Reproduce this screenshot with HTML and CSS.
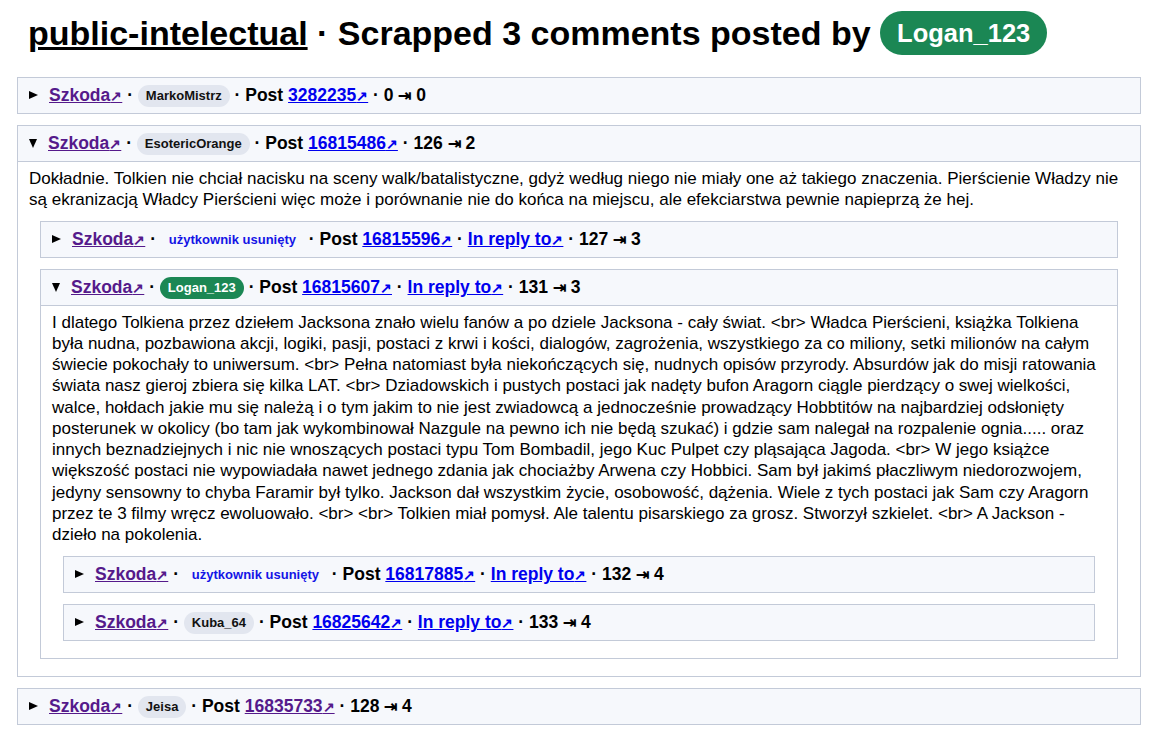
FILE: index.html
```html
<!DOCTYPE html>
<html lang="pl">
<head>
<meta charset="utf-8">
<title>public-intelectual</title>
<link rel="stylesheet" href="styles.css">
</head>
<body>
<main class="page">
  <h1 class="title"><a class="title-link" href="#">public-intelectual</a> · Scrapped 3 comments posted by <span class="chip chip-big chip-green">Logan_123</span></h1>

  <details class="c">
    <summary class="s"><a class="ln visited" href="#">Szkoda<span class="ar">↗</span></a> · <span class="chip chip-gray">MarkoMistrz</span> · Post <a class="ln" href="#">3282235<span class="ar">↗</span></a> · 0 <span class="tab">⇥</span> 0</summary>
  </details>

  <details class="c" open>
    <summary class="s"><a class="ln visited" href="#">Szkoda<span class="ar">↗</span></a> · <span class="chip chip-gray">EsotericOrange</span> · Post <a class="ln" href="#">16815486<span class="ar">↗</span></a> · 126 <span class="tab">⇥</span> 2</summary>
    <div class="b">
      <p class="t">Dokładnie. Tolkien nie chciał nacisku na sceny walk/batalistyczne, gdyż według niego nie miały one aż takiego znaczenia. Pierścienie Władzy nie są ekranizacją Władcy Pierścieni więc może i porównanie nie do końca na miejscu, ale efekciarstwa pewnie napieprzą że hej.</p>

      <details class="c">
        <summary class="s"><a class="ln visited" href="#">Szkoda<span class="ar">↗</span></a> · <span class="chip chip-del">użytkownik usunięty</span> · Post <a class="ln" href="#">16815596<span class="ar">↗</span></a> · <a class="ln" href="#">In reply to<span class="ar">↗</span></a> · 127 <span class="tab">⇥</span> 3</summary>
      </details>

      <details class="c" open>
        <summary class="s"><a class="ln visited" href="#">Szkoda<span class="ar">↗</span></a> · <span class="chip chip-green">Logan_123</span> · Post <a class="ln" href="#">16815607<span class="ar">↗</span></a> · <a class="ln" href="#">In reply to<span class="ar">↗</span></a> · 131 <span class="tab">⇥</span> 3</summary>
        <div class="b">
          <p class="t">I dlatego Tolkiena przez dziełem Jacksona znało wielu fanów a po dziele Jacksona - cały świat. &lt;br&gt; Władca Pierścieni, książka Tolkiena była nudna, pozbawiona akcji, logiki, pasji, postaci z krwi i kości, dialogów, zagrożenia, wszystkiego za co miliony, setki milionów na całym świecie pokochały to uniwersum. &lt;br&gt; Pełna natomiast była niekończących się, nudnych opisów przyrody. Absurdów jak do misji ratowania świata nasz gieroj zbiera się kilka LAT. &lt;br&gt; Dziadowskich i pustych postaci jak nadęty bufon Aragorn ciągle pierdzący o swej wielkości, walce, hołdach jakie mu się należą i o tym jakim to nie jest zwiadowcą a jednocześnie prowadzący Hobbtitów na najbardziej odsłonięty posterunek w okolicy (bo tam jak wykombinował Nazgule na pewno ich nie będą szukać) i gdzie sam nalegał na rozpalenie ognia..... oraz innych beznadziejnych i nic nie wnoszących postaci typu Tom Bombadil, jego Kuc Pulpet czy pląsająca Jagoda. &lt;br&gt; W jego książce większość postaci nie wypowiadała nawet jednego zdania jak chociażby Arwena czy Hobbici. Sam był jakimś płaczliwym niedorozwojem, jedyny sensowny to chyba Faramir był tylko. Jackson dał wszystkim życie, osobowość, dążenia. Wiele z tych postaci jak Sam czy Aragorn przez te 3 filmy wręcz ewoluowało. &lt;br&gt; &lt;br&gt; Tolkien miał pomysł. Ale talentu pisarskiego za grosz. Stworzył szkielet. &lt;br&gt; A Jackson - dzieło na pokolenia.</p>

          <details class="c">
            <summary class="s"><a class="ln visited" href="#">Szkoda<span class="ar">↗</span></a> · <span class="chip chip-del">użytkownik usunięty</span> · Post <a class="ln" href="#">16817885<span class="ar">↗</span></a> · <a class="ln" href="#">In reply to<span class="ar">↗</span></a> · 132 <span class="tab">⇥</span> 4</summary>
          </details>

          <details class="c">
            <summary class="s"><a class="ln visited" href="#">Szkoda<span class="ar">↗</span></a> · <span class="chip chip-gray">Kuba_64</span> · Post <a class="ln" href="#">16825642<span class="ar">↗</span></a> · <a class="ln" href="#">In reply to<span class="ar">↗</span></a> · 133 <span class="tab">⇥</span> 4</summary>
          </details>
        </div>
      </details>
    </div>
  </details>

  <details class="c">
    <summary class="s"><a class="ln visited" href="#">Szkoda<span class="ar">↗</span></a> · <span class="chip chip-gray">Jeisa</span> · Post <a class="ln visited" href="#">16835733<span class="ar">↗</span></a> · 128 <span class="tab">⇥</span> 4</summary>
  </details>
</main>
</body>
</html>
```

FILE: styles.css
```css
html, body {
  margin: 0;
  padding: 0;
  background: #ffffff;
}

body {
  font-family: "Liberation Sans", Arial, sans-serif;
  color: #000000;
}

.page {
  padding: 0 14px 0 17px;
}

.title {
  margin: 11px 0 22px;
  padding: 0 11px;
  font-size: 34px;
  font-weight: bold;
  line-height: 44px;
}

.title-link {
  color: #000000;
  text-decoration: underline;
}

.chip {
  display: inline-block;
  border-radius: 999px;
  font-size: 13px;
  font-weight: bold;
  line-height: 22px;
  padding: 0 8px;
  vertical-align: 1px;
}

.chip-gray {
  background: #e2e6ef;
  color: #111111;
}

.chip-green {
  background: #1b8754;
  color: #ffffff;
}

.chip-del {
  background: transparent;
  color: #1414e6;
}

.chip-big {
  font-size: 25.5px;
  line-height: 44px;
  padding: 0 17px;
  vertical-align: top;
}

.c {
  border: 1px solid #c3cad8;
  margin: 11px 0;
  background: #ffffff;
}

.b > .c {
  margin: 11px 11px;
}

.s {
  display: block;
  list-style: none;
  background: #f6f8fc;
  padding: 6px 10px;
  font-size: 17.5px;
  font-weight: bold;
  line-height: 22px;
  cursor: pointer;
}

.s::-webkit-details-marker {
  display: none;
}

.s::before {
  content: "";
  display: inline-block;
  width: 0;
  height: 0;
  border-style: solid;
  border-color: transparent transparent transparent #000000;
  border-width: 4.5px 0 4.5px 9px;
  margin: 0 11px 0 1px;
  vertical-align: 2px;
}

details[open] > .s::before {
  border-color: #000000 transparent transparent transparent;
  border-width: 9px 4.5px 0 4.5px;
  vertical-align: 1px;
}

details[open] > .s {
  border-bottom: 1px solid #c3cad8;
}

.ln {
  color: #0000ee;
  text-decoration: underline;
}

.ln.visited {
  color: #551a8b;
}

.ar {
  font-size: 0.8em;
}

.tab {
  font-size: 0.9em;
}

.b {
  padding: 5.5px 11px 6px;
}

.t {
  margin: 0;
  font-size: 17px;
  line-height: 1.25;
}
```
